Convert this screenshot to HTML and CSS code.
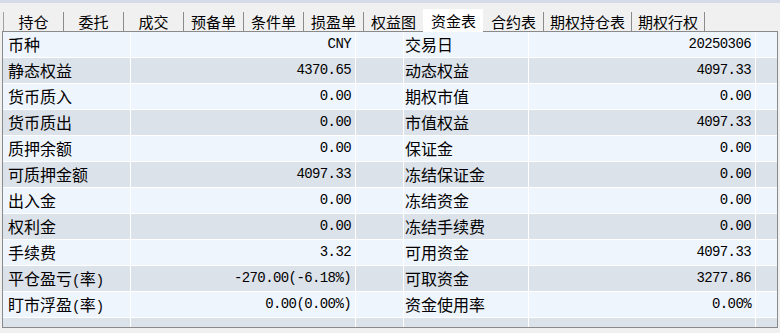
FILE: index.html
```html
<!DOCTYPE html>
<html lang="zh-CN">
<head>
    <meta charset="UTF-8">
    <title>资金表</title>
    <link rel="stylesheet" href="styles.css">
</head>
<body>
    <div class="topband"></div>
    <div class="tabs">
        <a class="tab">持仓</a>
        <a class="tab">委托</a>
        <a class="tab">成交</a>
        <a class="tab">预备单</a>
        <a class="tab">条件单</a>
        <a class="tab">损盈单</a>
        <a class="tab">权益图</a>
        <a class="tab active">资金表</a>
        <a class="tab">合约表</a>
        <a class="tab">期权持仓表</a>
        <a class="tab">期权行权</a>
    </div>
    <div class="fund">
        <div class="row">
            <div class="label">币种</div><div class="value">CNY</div><div></div>
            <div class="label right">交易日</div><div class="value">20250306</div><div></div>
        </div>
        <div class="row">
            <div class="label">静态权益</div><div class="value">4370.65</div><div></div>
            <div class="label right">动态权益</div><div class="value">4097.33</div><div></div>
        </div>
        <div class="row">
            <div class="label">货币质入</div><div class="value">0.00</div><div></div>
            <div class="label right">期权市值</div><div class="value">0.00</div><div></div>
        </div>
        <div class="row">
            <div class="label">货币质出</div><div class="value">0.00</div><div></div>
            <div class="label right">市值权益</div><div class="value">4097.33</div><div></div>
        </div>
        <div class="row">
            <div class="label">质押余额</div><div class="value">0.00</div><div></div>
            <div class="label right">保证金</div><div class="value">0.00</div><div></div>
        </div>
        <div class="row">
            <div class="label">可质押金额</div><div class="value">4097.33</div><div></div>
            <div class="label right">冻结保证金</div><div class="value">0.00</div><div></div>
        </div>
        <div class="row">
            <div class="label">出入金</div><div class="value">0.00</div><div></div>
            <div class="label right">冻结资金</div><div class="value">0.00</div><div></div>
        </div>
        <div class="row">
            <div class="label">权利金</div><div class="value">0.00</div><div></div>
            <div class="label right">冻结手续费</div><div class="value">0.00</div><div></div>
        </div>
        <div class="row">
            <div class="label">手续费</div><div class="value">3.32</div><div></div>
            <div class="label right">可用资金</div><div class="value">4097.33</div><div></div>
        </div>
        <div class="row">
            <div class="label">平仓盈亏<span class="mono">(</span>率<span class="mono">)</span></div><div class="value">-270.00(-6.18%)</div><div></div>
            <div class="label right">可取资金</div><div class="value">3277.86</div><div></div>
        </div>
        <div class="row">
            <div class="label">盯市浮盈<span class="mono">(</span>率<span class="mono">)</span></div><div class="value">0.00(0.00%)</div><div></div>
            <div class="label right">资金使用率</div><div class="value">0.00%</div><div></div>
        </div>
        <div class="row">
            <div></div><div></div><div></div><div></div><div></div><div></div>
        </div>
    </div>
</body>
</html>
```

FILE: styles.css
```css
body {
    margin: 0;
    background-color: #f0f0f0;
    font-family: "Noto Sans CJK SC", "Liberation Sans", sans-serif;
    color: #000;
}

.topband {
    height: 3px;
    background-color: #d6dce7;
}

.tabs {
    display: flex;
    height: 20px;
    margin-top: 8px;
    padding-left: 3px;
}

.tab {
    display: flex;
    align-items: center;
    justify-content: center;
    box-sizing: border-box;
    min-width: 60px;
    padding: 0 6px;
    font-size: 15px;
    line-height: 18px;
    border-left: 1px solid #8c8c8c;
    margin: 1px 0 0;
    cursor: default;
}

.tab:first-child {
    border-left-color: #a0a0a0;
}

.tab.active {
    background-color: #fff;
    margin-top: -2px;
    height: 23px;
    border-left: 1px solid transparent;
}

.tab.active + .tab {
    border-left-color: transparent;
}

.tab:last-child {
    border-right: 1px solid #8c8c8c;
}

.fund {
    box-sizing: border-box;
    width: 776px;
    height: 297px;
    margin-left: 2px;
    border: 1px solid #8a8a8a;
    overflow: hidden;
}

.row {
    display: grid;
    grid-template-columns: 128px 225px 48px 125px 227px 1fr;
    box-sizing: border-box;
    height: 26px;
    border-bottom: 1px solid #fff;
    background-color: #eff5fd;
}

.row:nth-child(even) {
    background-color: #dce2ea;
}

.row > div {
    border-right: 1px solid #fff;
    line-height: 25px;
    white-space: nowrap;
}

.row > div:last-child {
    border-right: 0;
}

.label {
    padding-left: 5px;
    font-size: 16px;
}

.label.right {
    padding-left: 1px;
}

.mono,
.value {
    font-family: "Liberation Mono", "DejaVu Sans Mono", monospace;
    font-size: 14px;
    letter-spacing: -0.6px;
}

.value {
    text-align: right;
    padding-right: 4px;
}
```
